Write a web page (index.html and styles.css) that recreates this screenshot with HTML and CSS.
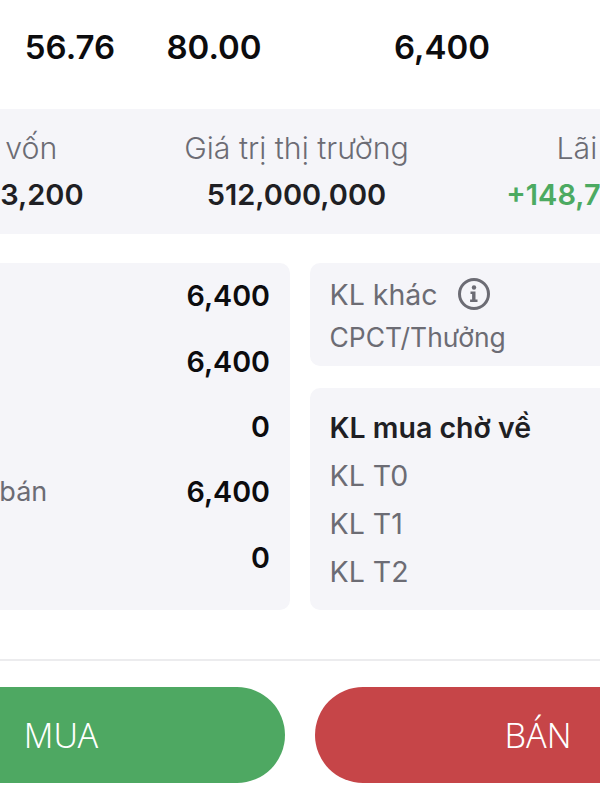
FILE: index.html
```html
<!DOCTYPE html>
<html lang="vi">
<head>
<meta charset="utf-8">
<title>Danh mục</title>
<link rel="stylesheet" href="styles.css">
</head>
<body>
<main class="page">
  <section class="quote">
    <div>56.76</div>
    <div>80.00</div>
    <div>6,400</div>
  </section>
  <section class="summary">
    <div class="metric"><div class="label">Tổng vốn</div><div class="amount">363,263,200</div></div>
    <div class="metric"><div class="label">Giá trị thị trường</div><div class="amount">512,000,000</div></div>
    <div class="metric"><div class="label">Lãi (lỗ)</div><div class="amount gain">+148,736,800</div></div>
  </section>
  <section class="details">
    <div class="card holdings">
      <div class="hrow"><span></span><b>6,400</b></div>
      <div class="hrow"><span></span><b>6,400</b></div>
      <div class="hrow"><span></span><b>0</b></div>
      <div class="hrow"><span class="label">KL có thể bán</span><b>6,400</b></div>
      <div class="hrow"><span></span><b>0</b></div>
    </div>
    <div class="side">
      <div class="card other">
        <div class="line label">KL khác
          <svg class="info" width="36" height="36" viewBox="0 0 36 36" aria-hidden="true">
            <circle cx="18" cy="18" r="14.5" fill="none" stroke="#6c6c74" stroke-width="3"/>
            <circle cx="18" cy="11.5" r="2.2" fill="#6c6c74"/>
            <path d="M14.5 15.5h5v8h2v2.4h-7.4v-2.4h2v-5.6h-1.6z" fill="#6c6c74"/>
          </svg>
        </div>
        <div class="line label narrow">CPCT/Thưởng</div>
      </div>
      <div class="card pending">
        <div class="line strong">KL mua chờ về</div>
        <div class="line label">KL T0</div>
        <div class="line label">KL T1</div>
        <div class="line label">KL T2</div>
      </div>
    </div>
  </section>
  <hr class="divider">
  <section class="actions">
    <button class="btn buy">MUA</button>
    <button class="btn sell">BÁN</button>
  </section>
</main>
</body>
</html>
```

FILE: styles.css
```css
html, body {
  margin: 0;
  padding: 0;
  height: 100%;
  overflow: hidden;
  background: #fff;
}
.page {
  width: 600px;
  height: 800px;
  overflow: hidden;
  font-family: Inter, "Noto Sans", sans-serif;
  color: #1f1f24;
}
.quote {
  height: 93px;
  display: grid;
  grid-template-columns: 140px 148px 308px;
  align-items: center;
  text-align: center;
  font-size: 33px;
  font-weight: 600;
  color: #0c0c0e;
}
.summary {
  margin-top: 16px;
  height: 125px;
  width: 920px;
  margin-left: -161px;
  background: #f5f5f9;
  display: grid;
  grid-template-columns: 305px 305px 310px;
  align-content: center;
  text-align: center;
}
.label {
  font-size: 28.5px;
  font-weight: 400;
  color: #6c6c74;
}
.metric .label {
  font-size: 30.3px;
  font-weight: 300;
  line-height: 44px;
}
.amount {
  font-size: 29px;
  font-weight: 600;
  line-height: 44px;
  margin-top: 3px;
  white-space: nowrap;
}
.gain {
  color: #4caa62;
}
.details {
  margin-top: 29px;
  margin-left: -149px;
  display: flex;
  gap: 20px;
  height: 347px;
}
.card {
  background: #f5f5f9;
  border-radius: 10px;
  box-sizing: border-box;
}
.holdings {
  width: 439px;
  flex: none;
  padding: 0 20px 20px;
  display: flex;
  flex-direction: column;
  justify-content: center;
}
.hrow {
  height: 65.5px;
  display: flex;
  justify-content: space-between;
  align-items: center;
  white-space: nowrap;
}
.hrow .label {
  font-size: 27px;
}
.hrow b {
  font-size: 28.7px;
  font-weight: 600;
  color: #0c0c0e;
}
.side {
  width: 420px;
  flex: none;
  display: flex;
  flex-direction: column;
  gap: 22px;
}
.other {
  height: 103px;
  padding: 9px 19.5px;
}
.other .line {
  height: 44px;
}
.other .narrow {
  font-size: 26.4px;
  margin-top: -1px;
}
.pending {
  flex: 1;
  padding: 15px 19.5px;
}
.line {
  height: 48px;
  display: flex;
  align-items: center;
  white-space: nowrap;
}
.strong {
  font-size: 28.5px;
  font-weight: 600;
}
.info {
  margin-left: 18px;
}
.divider {
  border: 0;
  height: 2px;
  background: #ececee;
  margin: 49px 0 0;
}
.actions {
  margin-top: 26px;
  margin-left: -163px;
  display: flex;
  gap: 30px;
}
.btn {
  flex: none;
  width: 448px;
  height: 96px;
  border: 0;
  border-radius: 48px;
  color: #fff;
  font-family: "Noto Sans", sans-serif;
  font-size: 34px;
  font-weight: 300;
}
.buy {
  background: #4ea862;
}
.sell {
  width: 446px;
  background: #c64548;
}
```
